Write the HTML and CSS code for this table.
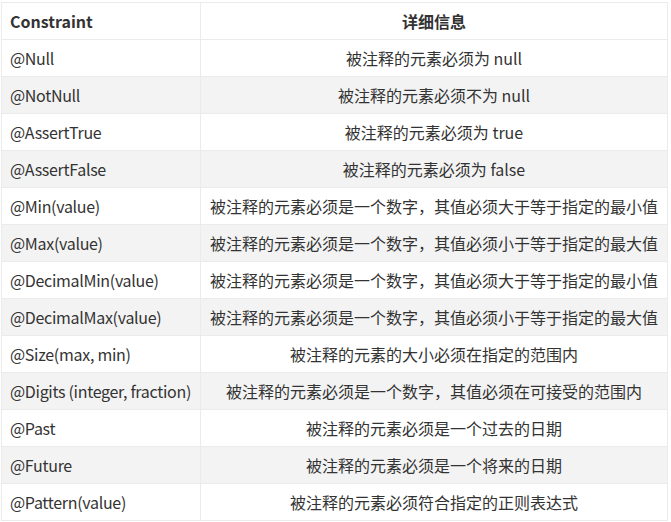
FILE: index.html
```html
<!DOCTYPE html>
<html>
<head>
<meta charset="utf-8">
<link rel="stylesheet" href="styles.css">
</head>
<body>
<table class="tbl">
  <colgroup><col class="c1"><col class="c2"></colgroup>
  <thead>
    <tr><th class="left">Constraint</th><th class="center">详细信息</th></tr>
  </thead>
  <tbody>
    <tr><td class="left">@Null</td><td class="center">被注释的元素必须为 null</td></tr>
    <tr><td class="left">@NotNull</td><td class="center">被注释的元素必须不为 null</td></tr>
    <tr><td class="left">@AssertTrue</td><td class="center">被注释的元素必须为 true</td></tr>
    <tr><td class="left">@AssertFalse</td><td class="center">被注释的元素必须为 false</td></tr>
    <tr><td class="left">@Min(value)</td><td class="center">被注释的元素必须是一个数字，其值必须大于等于指定的最小值</td></tr>
    <tr><td class="left">@Max(value)</td><td class="center">被注释的元素必须是一个数字，其值必须小于等于指定的最大值</td></tr>
    <tr><td class="left">@DecimalMin(value)</td><td class="center">被注释的元素必须是一个数字，其值必须大于等于指定的最小值</td></tr>
    <tr><td class="left">@DecimalMax(value)</td><td class="center">被注释的元素必须是一个数字，其值必须小于等于指定的最大值</td></tr>
    <tr><td class="left">@Size(max, min)</td><td class="center">被注释的元素的大小必须在指定的范围内</td></tr>
    <tr><td class="left">@Digits (integer, fraction)</td><td class="center">被注释的元素必须是一个数字，其值必须在可接受的范围内</td></tr>
    <tr><td class="left">@Past</td><td class="center">被注释的元素必须是一个过去的日期</td></tr>
    <tr><td class="left">@Future</td><td class="center">被注释的元素必须是一个将来的日期</td></tr>
    <tr><td class="left">@Pattern(value)</td><td class="center">被注释的元素必须符合指定的正则表达式</td></tr>
  </tbody>
</table>
</body>
</html>
```
FILE: styles.css
```css
html, body {
  margin: 0;
  padding: 0;
  background: #ffffff;
}
body {
  padding: 2px 0 0 1px;
  font-family: "Noto Sans CJK SC", "Noto Sans", sans-serif;
  font-size: 16px;
  color: #333333;
}
.tbl {
  border-collapse: collapse;
  table-layout: fixed;
  width: 666px;
}
.c1 { width: 199px; }
.c2 { width: 467px; }
.tbl th, .tbl td {
  border: 1px solid #ebebeb;
  height: 37px;
  padding: 0 8px;
  box-sizing: border-box;
  line-height: 20px;
  white-space: nowrap;
}
.tbl th {
  font-weight: bold;
  color: #333333;
}
.left { text-align: left; }
td.left { letter-spacing: -0.3px; }
.center { text-align: center; }
.tbl tbody tr:nth-child(even) td {
  background: #f3f3f3;
}
```
